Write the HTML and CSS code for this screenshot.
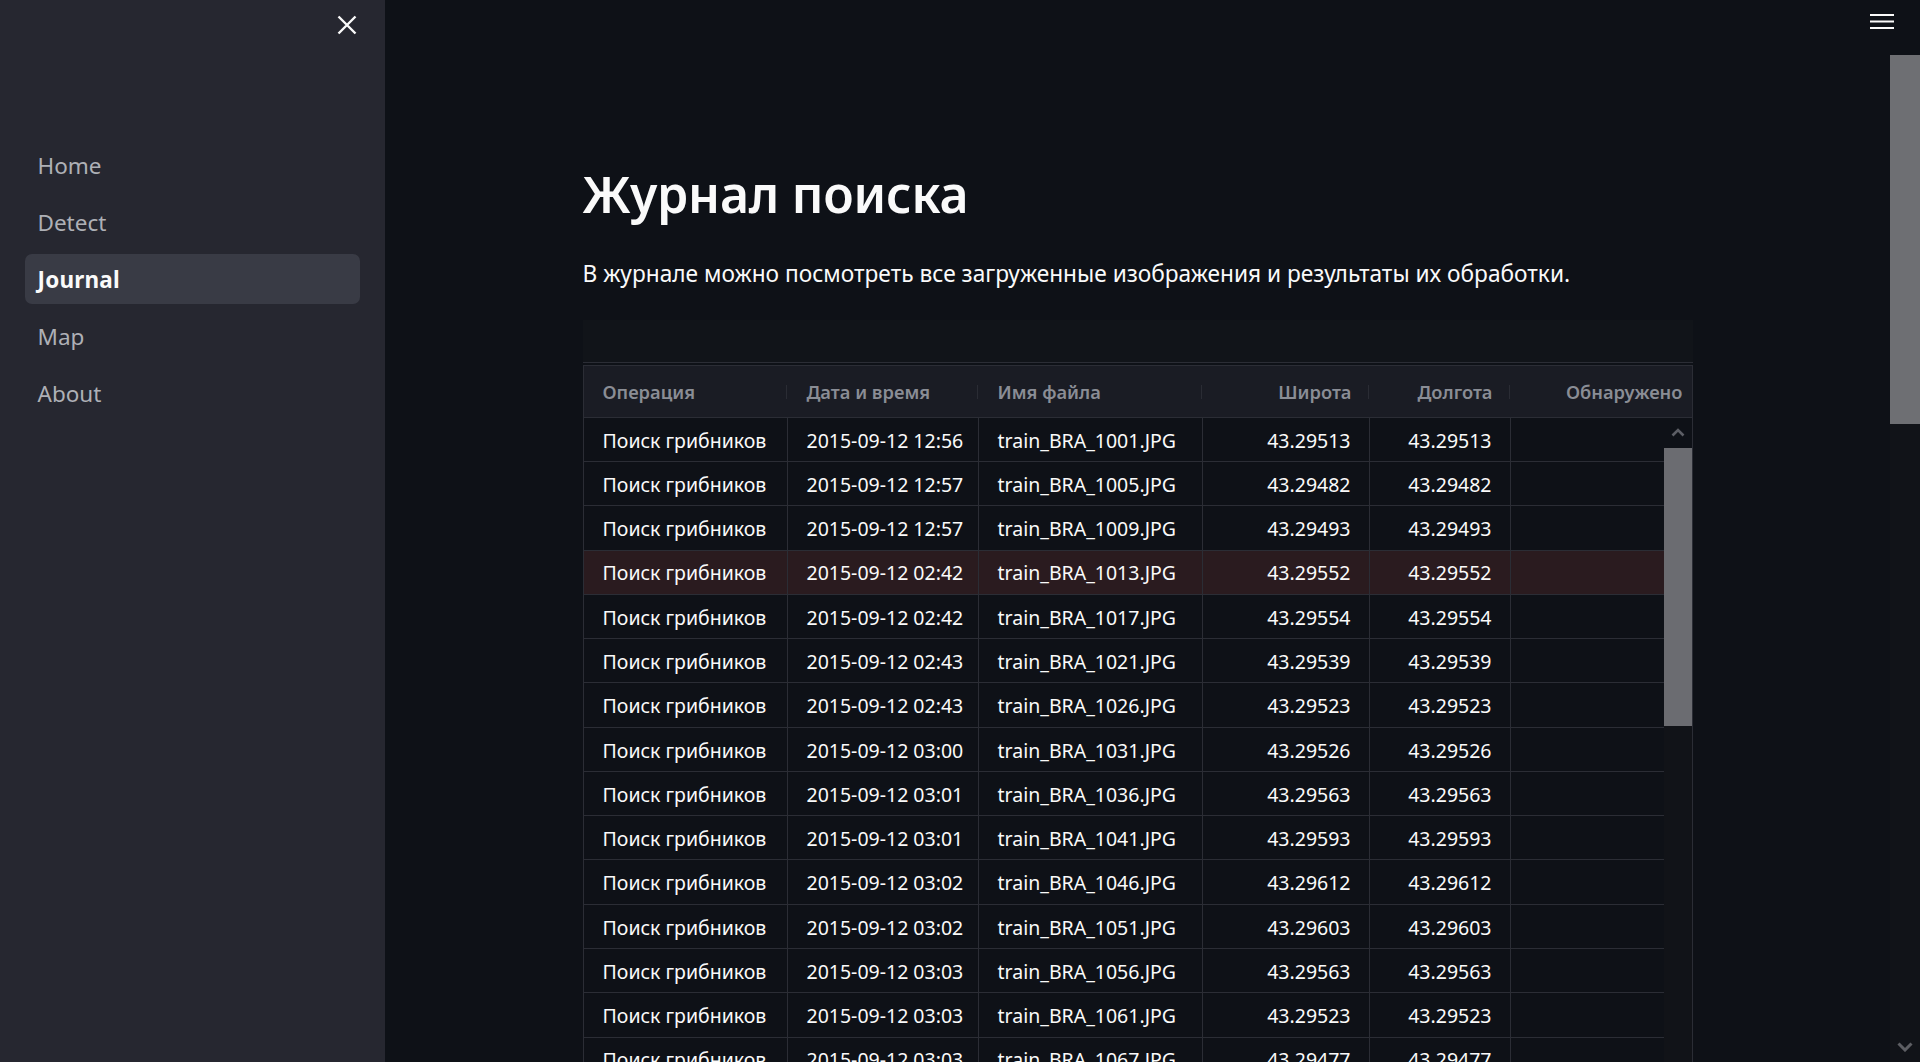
FILE: index.html
```html
<!DOCTYPE html>
<html lang="ru">
<head>
<meta charset="utf-8">
<title>Journal</title>
<link rel="stylesheet" href="styles.css">
</head>
<body>
<div class="app">
  <aside class="sidebar">
    <div class="sb-top">
      <svg class="close" width="20" height="20" viewBox="0 0 20 20"><path d="M1.5 1.5 L18.5 18.5 M18.5 1.5 L1.5 18.5" stroke="#fafafa" stroke-width="2.4" stroke-linecap="butt"/></svg>
    </div>
    <nav class="nav">
      <a class="nav-item">Home</a>
      <a class="nav-item">Detect</a>
      <a class="nav-item active">Journal</a>
      <a class="nav-item">Map</a>
      <a class="nav-item">About</a>
    </nav>
  </aside>
  <div class="main">
    <header class="topbar">
      <svg class="burger" width="24" height="18" viewBox="0 0 24 18"><path d="M0 2 H24 M0 8.5 H24 M0 15 H24" stroke="#fafafa" stroke-width="2.2"/></svg>
    </header>
    <div class="main-body">
      <div class="content-wrap">
        <div class="content">
          <h1 class="title">Журнал поиска</h1>
          <p class="lead">В журнале можно посмотреть все загруженные изображения и результаты их обработки.</p>
          <div class="grid-toolbar"></div>
          <div class="grid">
            <div class="grid-head">
              <div class="hcell">Операция</div>
              <div class="hcell">Дата и время</div>
              <div class="hcell">Имя файла</div>
              <div class="hcell num">Широта</div>
              <div class="hcell num">Долгота</div>
              <div class="hcell num last">Обнаружено</div>
            </div>
            <div class="grid-body">
              <div class="rows">
                <div class="row"><div class="cell">Поиск грибников</div><div class="cell">2015-09-12 12:56</div><div class="cell">train_BRA_1001.JPG</div><div class="cell num">43.29513</div><div class="cell num">43.29513</div><div class="cell"></div></div>
                <div class="row"><div class="cell">Поиск грибников</div><div class="cell">2015-09-12 12:57</div><div class="cell">train_BRA_1005.JPG</div><div class="cell num">43.29482</div><div class="cell num">43.29482</div><div class="cell"></div></div>
                <div class="row"><div class="cell">Поиск грибников</div><div class="cell">2015-09-12 12:57</div><div class="cell">train_BRA_1009.JPG</div><div class="cell num">43.29493</div><div class="cell num">43.29493</div><div class="cell"></div></div>
                <div class="row hl"><div class="cell">Поиск грибников</div><div class="cell">2015-09-12 02:42</div><div class="cell">train_BRA_1013.JPG</div><div class="cell num">43.29552</div><div class="cell num">43.29552</div><div class="cell"></div></div>
                <div class="row"><div class="cell">Поиск грибников</div><div class="cell">2015-09-12 02:42</div><div class="cell">train_BRA_1017.JPG</div><div class="cell num">43.29554</div><div class="cell num">43.29554</div><div class="cell"></div></div>
                <div class="row"><div class="cell">Поиск грибников</div><div class="cell">2015-09-12 02:43</div><div class="cell">train_BRA_1021.JPG</div><div class="cell num">43.29539</div><div class="cell num">43.29539</div><div class="cell"></div></div>
                <div class="row"><div class="cell">Поиск грибников</div><div class="cell">2015-09-12 02:43</div><div class="cell">train_BRA_1026.JPG</div><div class="cell num">43.29523</div><div class="cell num">43.29523</div><div class="cell"></div></div>
                <div class="row"><div class="cell">Поиск грибников</div><div class="cell">2015-09-12 03:00</div><div class="cell">train_BRA_1031.JPG</div><div class="cell num">43.29526</div><div class="cell num">43.29526</div><div class="cell"></div></div>
                <div class="row"><div class="cell">Поиск грибников</div><div class="cell">2015-09-12 03:01</div><div class="cell">train_BRA_1036.JPG</div><div class="cell num">43.29563</div><div class="cell num">43.29563</div><div class="cell"></div></div>
                <div class="row"><div class="cell">Поиск грибников</div><div class="cell">2015-09-12 03:01</div><div class="cell">train_BRA_1041.JPG</div><div class="cell num">43.29593</div><div class="cell num">43.29593</div><div class="cell"></div></div>
                <div class="row"><div class="cell">Поиск грибников</div><div class="cell">2015-09-12 03:02</div><div class="cell">train_BRA_1046.JPG</div><div class="cell num">43.29612</div><div class="cell num">43.29612</div><div class="cell"></div></div>
                <div class="row"><div class="cell">Поиск грибников</div><div class="cell">2015-09-12 03:02</div><div class="cell">train_BRA_1051.JPG</div><div class="cell num">43.29603</div><div class="cell num">43.29603</div><div class="cell"></div></div>
                <div class="row"><div class="cell">Поиск грибников</div><div class="cell">2015-09-12 03:03</div><div class="cell">train_BRA_1056.JPG</div><div class="cell num">43.29563</div><div class="cell num">43.29563</div><div class="cell"></div></div>
                <div class="row"><div class="cell">Поиск грибников</div><div class="cell">2015-09-12 03:03</div><div class="cell">train_BRA_1061.JPG</div><div class="cell num">43.29523</div><div class="cell num">43.29523</div><div class="cell"></div></div>
                <div class="row"><div class="cell">Поиск грибников</div><div class="cell">2015-09-12 03:03</div><div class="cell">train_BRA_1067.JPG</div><div class="cell num">43.29477</div><div class="cell num">43.29477</div><div class="cell"></div></div>
                <div class="row"><div class="cell">Поиск грибников</div><div class="cell">2015-09-12 03:04</div><div class="cell">train_BRA_1072.JPG</div><div class="cell num">43.29451</div><div class="cell num">43.29451</div><div class="cell"></div></div>
              </div>
              <div class="vscroll">
                <div class="vs-up"><svg width="14" height="9" viewBox="0 0 14 9"><path d="M1.5 7.5 L7 2 L12.5 7.5" fill="none" stroke="#5c5e65" stroke-width="2.6"/></svg></div>
                <div class="vs-thumb"></div>
              </div>
            </div>
          </div>
        </div>
      </div>
      <div class="page-scroll">
        <div class="ps-thumb"></div>
        <div class="ps-spacer"></div>
        <svg class="ps-down" width="16" height="10" viewBox="0 0 16 10"><path d="M1.5 1.5 L8 8 L14.5 1.5" fill="none" stroke="#5d5e63" stroke-width="3"/></svg>
      </div>
    </div>
  </div>
</div>
</body>
</html>
```
FILE: styles.css
```css
html, body {
  margin: 0;
  height: 100%;
  overflow: hidden;
  background: #0e1117;
  color: #fafafa;
  font-family: "Noto Sans", "Open Sans", sans-serif;
}

.app {
  display: flex;
  height: 1062px;
  overflow: hidden;
}

/* ---------- sidebar ---------- */
.sidebar {
  width: 385px;
  flex: none;
  background: #262730;
  padding: 0 25px;
  box-sizing: border-box;
}

.sb-top {
  height: 140px;
  box-sizing: border-box;
  padding-top: 15px;
  padding-right: 3px;
  display: flex;
  justify-content: flex-end;
  align-items: flex-start;
}

.nav {
  display: flex;
  flex-direction: column;
  gap: 7px;
}

.nav-item {
  height: 50px;
  display: flex;
  align-items: center;
  padding-left: 12.5px;
  border-radius: 7px;
  font-size: 22.5px;
  color: #aeb0b6;
}

.nav-item.active {
  background: #393b45;
  color: #fafafa;
  font-weight: 700;
  letter-spacing: 0.2px;
}

/* ---------- main ---------- */
.main {
  flex: 1;
  min-width: 0;
  display: flex;
  flex-direction: column;
}

.topbar {
  height: 55px;
  flex: none;
  box-sizing: border-box;
  padding: 13px 26px 0 0;
  display: flex;
  justify-content: flex-end;
  align-items: flex-start;
}

.main-body {
  flex: 1;
  min-height: 0;
  display: flex;
}

.content-wrap {
  flex: 1;
  min-width: 0;
  overflow: hidden;
  padding-top: 109px;
}

.content {
  width: 1110px;
  margin: 0 auto;
}

.title {
  margin: 0;
  font-size: 50px;
  line-height: 1.2;
  font-weight: 600;
  letter-spacing: -0.2px;
}

.lead {
  margin: 31.5px 0 28px;
  font-size: 22.7px;
  line-height: 1.6;
}

/* ---------- data grid ---------- */
.grid-toolbar {
  height: 42px;
  background: #111419;
  border-bottom: 1px solid #2b2d35;
  margin-bottom: 2px;
}

.grid {
  border: 1px solid #2b2d35;
  border-bottom: none;
}

.grid-head {
  display: grid;
  grid-template-columns: 204px 191px 224px 167px 141px 1fr;
  height: 51px;
  background: #1a1c24;
  border-bottom: 1px solid #2b2d35;
}

.hcell {
  position: relative;
  display: flex;
  align-items: center;
  padding: 0 19px;
  font-size: 18.3px;
  font-weight: 600;
  color: #8a8d95;
  white-space: nowrap;
}

.hcell::after {
  content: "";
  position: absolute;
  right: 1px;
  top: 19px;
  width: 1px;
  height: 14px;
  background: #2a2c34;
}

.hcell.last::after {
  display: none;
}

.hcell.num {
  justify-content: flex-end;
  padding-right: 18px;
}

.hcell.last {
  padding-right: 9px;
}

.grid-body {
  display: flex;
}

.rows {
  flex: 1;
  min-width: 0;
}

.row {
  display: grid;
  grid-template-columns: 204px 191px 224px 167px 141px 1fr;
  height: 44.28px;
  box-sizing: border-box;
  border-bottom: 1px solid #2b2d35;
}

.row.hl {
  background: #2a1b1f;
}

.cell {
  display: flex;
  align-items: center;
  padding: 1.5px 19px 0;
  font-size: 19.5px;
  white-space: nowrap;
  border-right: 1px solid #2b2d35;
}

.cell:last-child {
  border-right: none;
}

.cell.num {
  justify-content: flex-end;
  padding-right: 18px;
}

.vscroll {
  width: 28px;
  flex: none;
  background: #111318;
  display: flex;
  flex-direction: column;
}

.vs-up {
  height: 30px;
  display: flex;
  align-items: center;
  justify-content: center;
  background: #0e1117;
}

.vs-thumb {
  height: 278px;
  background: #6b6c71;
}

/* ---------- page scrollbar ---------- */
.page-scroll {
  width: 30px;
  flex: none;
  background: #111318;
  display: flex;
  flex-direction: column;
  align-items: center;
}

.ps-thumb {
  width: 30px;
  height: 369px;
  background: #6e6f73;
}

.ps-spacer {
  flex: 1;
}

.ps-down {
  margin-bottom: 10px;
}
```
